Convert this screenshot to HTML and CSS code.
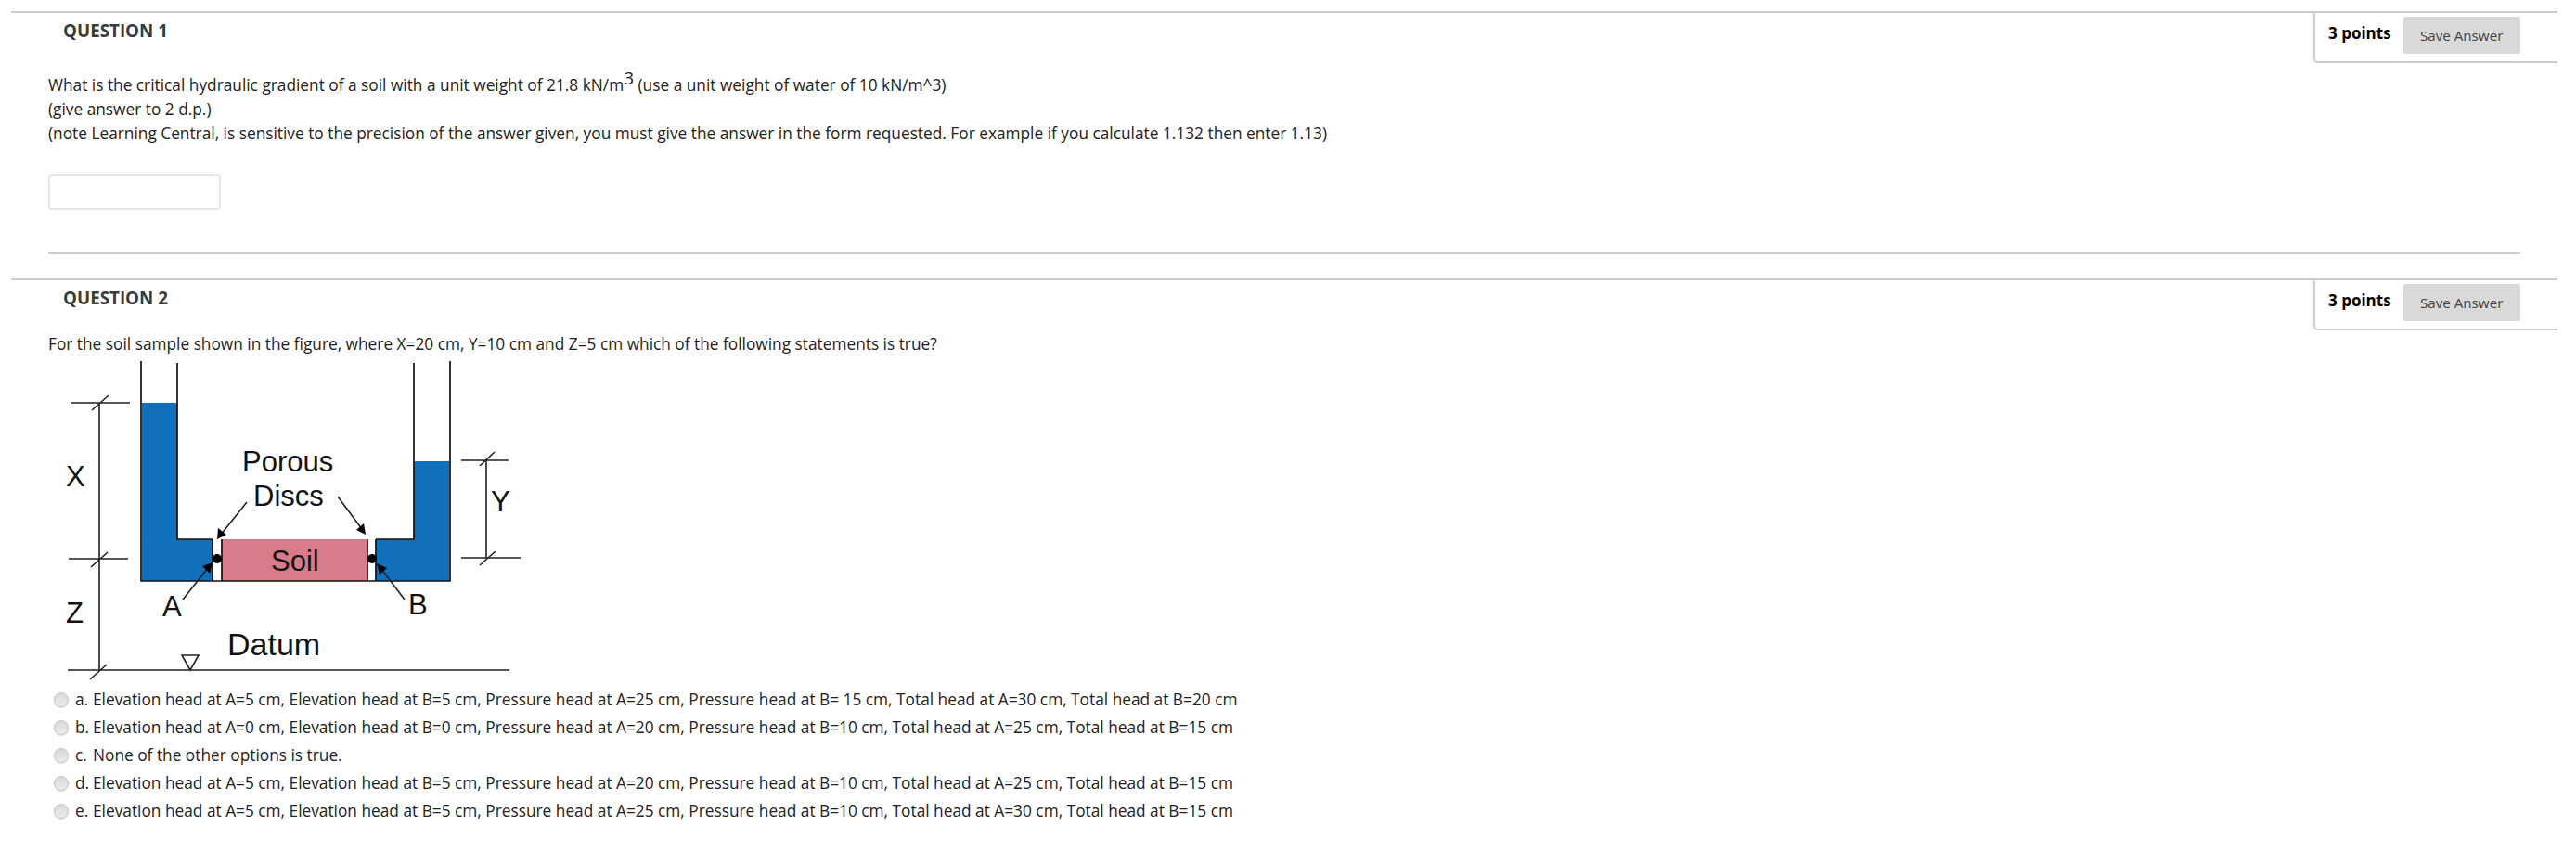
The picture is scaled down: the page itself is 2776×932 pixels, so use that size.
FILE: index.html
```html
<!DOCTYPE html>
<html lang="en">

<head>
    <meta charset="UTF-8">
    <title>Test</title>
    <link rel="stylesheet" href="styles.css">
</head>

<body>
    <section class="question">
        <header class="q-head">
            <h2>QUESTION 1</h2>
            <div class="points">
                <span class="points-text">3 points</span>
                <button class="save">Save Answer</button>
            </div>
        </header>
        <div class="q-body">
            <p>What is the critical hydraulic gradient of a soil with a unit weight of 21.8 kN/m<sup>3</sup> (use a unit weight of water of 10 kN/m^3)</p>
            <p>(give answer to 2 d.p.)</p>
            <p>(note Learning Central, is sensitive to the precision of the answer given, you must give the answer in the form requested. For example if you calculate 1.132 then enter 1.13)</p>
            <input class="answer" type="text">
            <hr>
        </div>
    </section>

    <section class="question">
        <header class="q-head">
            <h2>QUESTION 2</h2>
            <div class="points">
                <span class="points-text">3 points</span>
                <button class="save">Save Answer</button>
            </div>
        </header>
        <div class="q-body">
            <p>For the soil sample shown in the figure, where X=20 cm, Y=10 cm and Z=5 cm which of the following statements is true?</p>
            <svg class="figure" width="520" height="355" viewBox="52 384 520 355">
                <!-- water and soil -->
                <path class="water" d="M153 434H191V581H229V626H153Z" />
                <path class="water" d="M446 497H484V626H405V581H446Z" />
                <rect class="soil" x="239" y="581" width="157" height="45" />
                <!-- tubes -->
                <path class="line" d="M152 389V626H485V389M191 391V581H229M405 581H446V391" />
                <path class="line" d="M229 581V626M239 581V626M396 581V626M405 581V626" />
                <!-- dimension lines -->
                <path class="thin" d="M76 434H140M107 434V722M99 442L117 426M74 602H138M98 611L116 595M73 722H549M97 732L115 716" />
                <path class="thin" d="M497 496H548M524 496V601M517 502L533 487M497 601H561M517 609L534 594" />
                <path class="datum" d="M196 706H214L205 722Z" />
                <!-- pointers -->
                <path class="thin" d="M266 541L238 576M364 535L390 570M197 646L224 612M436 646L411 613" />
                <path class="head" d="M234 581L235 569L244 576Z" />
                <path class="head" d="M394 576L384 571L392 564Z" />
                <path class="head" d="M229 606L218 610L226 618Z" />
                <path class="head" d="M406 607L409 619L417 612Z" />
                <circle class="head" cx="234" cy="602" r="5" />
                <circle class="head" cx="401" cy="602" r="5" />
                <!-- labels -->
                <text x="71" y="524">X</text>
                <text x="529" y="551">Y</text>
                <text x="71" y="671">Z</text>
                <text x="261" y="508">Porous</text>
                <text x="273" y="545">Discs</text>
                <text x="292" y="615">Soil</text>
                <text x="175" y="664">A</text>
                <text x="440" y="662">B</text>
                <text class="big" x="245" y="706">Datum</text>
            </svg>
            <ul class="options">
                <li><input type="radio" name="q2"><span class="letter">a.</span>Elevation head at A=5 cm, Elevation head at B=5 cm, Pressure head at A=25 cm, Pressure head at B= 15 cm, Total head at A=30 cm, Total head at B=20 cm</li>
                <li><input type="radio" name="q2"><span class="letter">b.</span>Elevation head at A=0 cm, Elevation head at B=0 cm, Pressure head at A=20 cm, Pressure head at B=10 cm, Total head at A=25 cm, Total head at B=15 cm</li>
                <li><input type="radio" name="q2"><span class="letter">c.</span>None of the other options is true.</li>
                <li><input type="radio" name="q2"><span class="letter">d.</span>Elevation head at A=5 cm, Elevation head at B=5 cm, Pressure head at A=20 cm, Pressure head at B=10 cm, Total head at A=25 cm, Total head at B=15 cm</li>
                <li><input type="radio" name="q2"><span class="letter">e.</span>Elevation head at A=5 cm, Elevation head at B=5 cm, Pressure head at A=25 cm, Pressure head at B=10 cm, Total head at A=30 cm, Total head at B=15 cm</li>
            </ul>
        </div>
    </section>
</body></html>
```

FILE: styles.css
```css
* {
    box-sizing: border-box;
    padding: 0;
    margin: 0;
}

body {
    font-family: "Open Sans", "Liberation Sans", sans-serif;
    font-size: 17.3px;
    line-height: 26px;
    color: #222;
    background: #fff;
    padding: 12px 20px 0 12px;
}

.question {
    border-top: 2px solid #ccc;
}

.q-head {
    display: flex;
    justify-content: space-between;
    align-items: flex-start;
}

.q-head h2 {
    font-size: 18.8px;
    font-weight: 700;
    line-height: 24px;
    color: #3a3a3a;
    padding: 7px 0 0 56px;
}

.points {
    display: flex;
    gap: 13px;
    width: 263px;
    height: 54px;
    padding: 4px 0 0 14px;
    border-left: 2px solid #ccc;
    border-bottom: 2px solid #ccc;
    border-bottom-left-radius: 5px;
}

.points-text {
    font-weight: 700;
    font-size: 17px;
    color: #000;
    line-height: 35px;
}

.save {
    width: 126px;
    height: 40px;
    font-family: inherit;
    font-size: 15.2px;
    color: #444;
    background: #d9d9d9;
    border: 0;
    border-radius: 2px;
}

.q-body {
    padding: 11px 40px 0 40px;
}

.q-body sup {
    font-size: 19px;
    line-height: 0;
}

.answer {
    display: block;
    width: 186px;
    height: 38px;
    margin-top: 31px;
    border: 2px solid #e6e6e6;
    border-radius: 4px;
    background: #fff;
}

hr {
    border: 0;
    border-top: 2px solid #ccc;
    margin: 46px 0 26px;
}

.question + .question .q-body {
    padding-top: 2px;
}

.figure {
    display: block;
}

.figure text {
    font-family: "Liberation Sans", Arial, sans-serif;
    font-size: 31px;
    fill: #111;
}

.figure .big {
    font-size: 34px;
}

.water {
    fill: #1170bc;
}

.soil {
    fill: #d87b8b;
}

.line {
    fill: none;
    stroke: #111;
    stroke-width: 1.7;
}

.thin {
    fill: none;
    stroke: #222;
    stroke-width: 1.6;
}

.datum {
    fill: #fff;
    stroke: #222;
    stroke-width: 1.6;
}

.head {
    fill: #000;
}

.options {
    list-style: none;
}

.options li {
    display: flex;
    align-items: center;
    height: 30px;
    padding-left: 6px;
    white-space: nowrap;
}

.options input {
    appearance: none;
    width: 16px;
    height: 16px;
    margin-right: 7px;
    border: 1px solid #c4c4c4;
    border-radius: 50%;
    background: linear-gradient(#d8d8d8, #ececec);
    box-shadow: 0 1px 1px #ddd;
}

.letter {
    width: 19px;
}
```
